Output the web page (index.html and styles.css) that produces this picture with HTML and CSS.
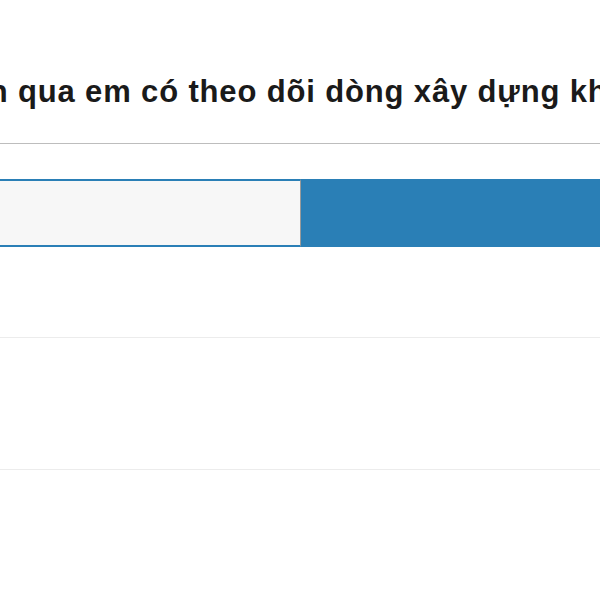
FILE: index.html
```html
<!DOCTYPE html>
<html lang="vi">
<head>
<meta charset="utf-8">
<link rel="stylesheet" href="styles.css">
</head>
<body>
<div class="page">
  <h2 class="question"><span class="q-text">Thời gian qua em có theo dõi dòng xây dựng khu vực này không?</span></h2>
  <div class="toggle">
    <div class="opt opt-off"></div>
    <div class="opt opt-on"></div>
  </div>
  <div class="row"></div>
  <div class="row"></div>
</div>
</body>
</html>
```
FILE: styles.css
```css
html, body {
  margin: 0;
  padding: 0;
  background: #ffffff;
  overflow: hidden;
  width: 600px;
  height: 600px;
}
.page {
  width: 600px;
  font-family: "Liberation Sans", Arial, sans-serif;
}
.question {
  margin: 0;
  padding-top: 75px;
  height: 144px;
  box-sizing: border-box;
  border-bottom: 1px solid #bdbdbd;
  font-size: 31px;
  font-weight: bold;
  letter-spacing: 0.85px;
  color: #1a1a1a;
  white-space: nowrap;
  overflow: hidden;
  line-height: 34px;
}
.q-text {
  display: inline-block;
  margin-left: -140px;
}
.toggle {
  display: flex;
  margin-top: 35px;
  height: 68px;
}
.opt {
  box-sizing: border-box;
  height: 68px;
}
.opt-off {
  width: 301px;
  background: #f7f7f7;
  border-top: 2px solid #2a7fb6;
  border-bottom: 2px solid #2a7fb6;
  border-right: 1px solid #9a9a9a;
}
.opt-on {
  flex: 1;
  background: #2a7fb6;
}
.row {
  height: 90px;
  border-bottom: 1px solid #ececec;
}
.row + .row {
  height: 131px;
}
```
